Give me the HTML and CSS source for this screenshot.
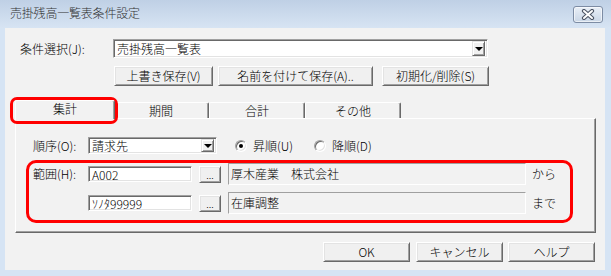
FILE: index.html
```html
<!DOCTYPE html>
<html lang="ja">
<head>
<meta charset="utf-8">
<title>売掛残高一覧表条件設定</title>
<link rel="stylesheet" href="styles.css">
</head>
<body>
<div class="window">
  <div class="titlebar">
    <span class="title">売掛残高一覧表条件設定</span>
    <div class="close">
      <svg width="14" height="11" viewBox="0 0 14 11">
        <path d="M3 2 L11 9 M11 2 L3 9" stroke="#4e5666" stroke-width="4.2" stroke-linecap="round" fill="none"/>
        <path d="M3 2 L11 9 M11 2 L3 9" stroke="#ffffff" stroke-width="2" stroke-linecap="round" fill="none"/>
      </svg>
    </div>
  </div>
  <div class="client">
    <div class="row-cond">
      <span class="lbl-cond">条件選択(J):</span>
      <div class="combo combo-main">
        <span class="combo-text">売掛残高一覧表</span>
        <span class="drop"><i class="tri"></i></span>
      </div>
    </div>
    <div class="row-actions">
      <div class="btn btn-save">上書き保存(V)</div>
      <div class="btn btn-saveas">名前を付けて保存(A)..</div>
      <div class="btn btn-reset">初期化/削除(S)</div>
    </div>
    <div class="tabs">
      <div class="tab tab-sel">集計</div>
      <div class="tab">期間</div>
      <div class="tab">合計</div>
      <div class="tab">その他</div>
    </div>
    <div class="panel">
      <div class="prow prow-order">
        <span class="plbl">順序(O):</span>
        <div class="combo combo-order">
          <span class="combo-text">請求先</span>
          <span class="drop"><i class="tri"></i></span>
        </div>
        <div class="radio-item radio-asc"><span class="radio on"></span><span>昇順(U)</span></div>
        <div class="radio-item radio-desc"><span class="radio"></span><span>降順(D)</span></div>
      </div>
      <div class="prow prow-range">
        <span class="plbl">範囲(H):</span>
        <div class="edit">A002</div>
        <div class="btn btn-dots">...</div>
        <div class="static">厚木産業　株式会社</div>
        <span class="suffix">から</span>
      </div>
      <div class="prow prow-range prow-to">
        <div class="edit">ｿﾉﾀ99999</div>
        <div class="btn btn-dots">...</div>
        <div class="static">在庫調整</div>
        <span class="suffix">まで</span>
      </div>
    </div>
    <div class="footer">
      <div class="btn btn-foot">OK</div>
      <div class="btn btn-foot btn-cancel">キャンセル</div>
      <div class="btn btn-foot btn-help">ヘルプ</div>
    </div>
    <div class="mark mark-tab"></div>
    <div class="mark mark-range"></div>
  </div>
</div>
</body>
</html>
```

FILE: styles.css
```css
* { box-sizing: border-box; }
html, body { margin: 0; padding: 0; }
body {
  width: 611px;
  height: 276px;
  overflow: hidden;
  background: #d6e4f4;
  font-family: "Noto Sans CJK JP", "DejaVu Sans", sans-serif;
  font-size: 12px;
  font-weight: 300;
  color: #000;
}
.window {
  width: 611px;
  height: 276px;
  background: #d6e4f4;
}
.titlebar {
  height: 28px;
  display: flex;
  align-items: center;
  justify-content: space-between;
  padding: 0 8px 3px 10px;
  background: linear-gradient(#bfd0e5, #d7e4f3);
}
.title {
  font-size: 12px;
  line-height: 14px;
  color: #333;
  letter-spacing: -0.2px;
}
.close {
  width: 30px;
  height: 17px;
  margin-top: 3px;
  border: 1px solid #7d8ca4;
  border-radius: 3px;
  background: linear-gradient(#e9eff7, #c9d6e6);
  box-shadow: inset 0 0 0 1px rgba(255,255,255,0.6);
  display: flex;
  align-items: center;
  justify-content: center;
}
.client {
  position: relative;
  margin-left: 5px;
  width: 600px;
  height: 242px;
  background: #f2f2f2;
  display: flex;
  flex-direction: column;
}
.row-cond {
  margin-top: 11px;
  height: 19px;
  display: flex;
  align-items: center;
  padding-left: 15px;
}
.lbl-cond { width: 93px; line-height: 14px; }
.combo {
  position: relative;
  display: flex;
  align-items: center;
  background: #fff;
  border-top: 1px solid #a0a0a0;
  border-left: 1px solid #a0a0a0;
  border-right: 1px solid #fff;
  border-bottom: 1px solid #fff;
  box-shadow: inset 1px 1px 0 #696969, inset -1px -1px 0 #e3e3e3;
}
.combo-main { width: 375px; height: 19px; }
.combo-text { padding-left: 3px; line-height: 14px; flex: 1; }
.drop {
  width: 13px;
  height: 15px;
  margin-right: 2px;
  background: #f0f0f0;
  border-top: 1px solid #e3e3e3;
  border-left: 1px solid #e3e3e3;
  border-right: 1px solid #696969;
  border-bottom: 1px solid #696969;
  box-shadow: inset 1px 1px 0 #fff, inset -1px -1px 0 #a0a0a0;
  display: flex;
  align-items: center;
  justify-content: center;
}
.tri {
  width: 0;
  height: 0;
  border-left: 4px solid transparent;
  border-right: 4px solid transparent;
  border-top: 4px solid #000;
}
.row-actions {
  margin-top: 8px;
  height: 20px;
  display: flex;
  padding-left: 109px;
}
.btn {
  display: flex;
  align-items: center;
  justify-content: center;
  background: #f0f0f0;
  border-top: 1px solid #fff;
  border-left: 1px solid #fff;
  border-right: 1px solid #696969;
  border-bottom: 1px solid #696969;
  box-shadow: inset 1px 1px 0 #e3e3e3, inset -1px -1px 0 #a0a0a0;
  line-height: 14px;
  white-space: nowrap;
}
.btn-save { width: 99px; height: 20px; }
.btn-saveas { width: 155px; height: 20px; margin-left: 5px; }
.btn-reset { width: 107px; height: 20px; margin-left: 9px; }
.tabs {
  margin-top: 14px;
  height: 18px;
  display: flex;
  align-items: flex-end;
  padding-left: 12px;
}
.tab {
  width: 96px;
  height: 16px;
  background: #f2f2f2;
  border-top: 1px solid #fff;
  border-left: 1px solid #fff;
  border-right: 1px solid #696969;
  box-shadow: inset -1px 0 0 #a0a0a0;
  border-radius: 2px 2px 0 0;
  display: flex;
  justify-content: center;
  align-items: center;
  line-height: 14px;
  padding-top: 1px;
}
.tab-sel {
  position: relative;
  z-index: 2;
  width: 100px;
  height: 19px;
  margin: 0 -2px -1px -2px;
  align-items: flex-start;
  padding-top: 1px;
}
.panel {
  width: 581px;
  height: 115px;
  margin-left: 10px;
  border-top: 1px solid #fff;
  border-left: 1px solid #fff;
  border-right: 1px solid #696969;
  border-bottom: 1px solid #696969;
  box-shadow: inset -1px -1px 0 #a0a0a0;
  padding: 18px 0 0 17px;
  display: flex;
  flex-direction: column;
}
.prow {
  display: flex;
  align-items: center;
}
.prow-order { height: 17px; }
.plbl { width: 55px; line-height: 14px; }
.combo-order { width: 129px; height: 17px; }
.combo-order .drop { height: 13px; }
.radio-item {
  display: flex;
  align-items: center;
  gap: 6px;
  line-height: 14px;
}
.radio-asc { margin-left: 18px; }
.radio-desc { margin-left: 21px; }
.radio {
  position: relative;
  width: 12px;
  height: 12px;
  border-radius: 50%;
  background: #fff;
  border: 1px solid;
  border-color: #a0a0a0 #fff #fff #a0a0a0;
  box-shadow: inset 1px 1px 0 #696969, inset -1px -1px 0 #e3e3e3;
}
.radio.on::after {
  content: "";
  position: absolute;
  left: 3px;
  top: 3px;
  width: 4px;
  height: 4px;
  border-radius: 50%;
  background: #000;
}
.prow-range { height: 22px; margin-top: 9px; }
.prow-to { margin-top: 7px; padding-left: 55px; }
.edit {
  width: 104px;
  height: 16px;
  background: #fff;
  border-top: 1px solid #a0a0a0;
  border-left: 1px solid #a0a0a0;
  border-right: 1px solid #fff;
  border-bottom: 1px solid #fff;
  box-shadow: inset 1px 1px 0 #696969, inset -1px -1px 0 #e3e3e3;
  padding-left: 3px;
  line-height: 13px;
  display: flex;
  align-items: center;
}
.btn-dots {
  width: 22px;
  height: 17px;
  margin-left: 7px;
  font-size: 10px;
  align-items: flex-end;
  padding-bottom: 3px;
  line-height: 8px;
}
.static {
  width: 298px;
  height: 22px;
  margin-left: 7px;
  border-top: 1px solid #a0a0a0;
  border-left: 1px solid #a0a0a0;
  border-right: 1px solid #fff;
  border-bottom: 1px solid #fff;
  padding-left: 2px;
  display: flex;
  align-items: center;
  line-height: 14px;
}
.suffix { margin-left: 6px; line-height: 14px; }
.footer {
  margin-top: 9px;
  height: 20px;
  display: flex;
  padding-left: 318px;
}
.btn-foot { width: 87px; height: 20px; }
.btn-cancel { margin-left: 6px; }
.btn-help { margin-left: 5px; }
.mark {
  position: absolute;
  border: 3px solid #ff0000;
  pointer-events: none;
}
.mark-tab {
  left: 5px;
  top: 69px;
  width: 108px;
  height: 27px;
  border-radius: 7px;
}
.mark-range {
  left: 21px;
  top: 132px;
  width: 547px;
  height: 63px;
  border-radius: 10px;
}
```
